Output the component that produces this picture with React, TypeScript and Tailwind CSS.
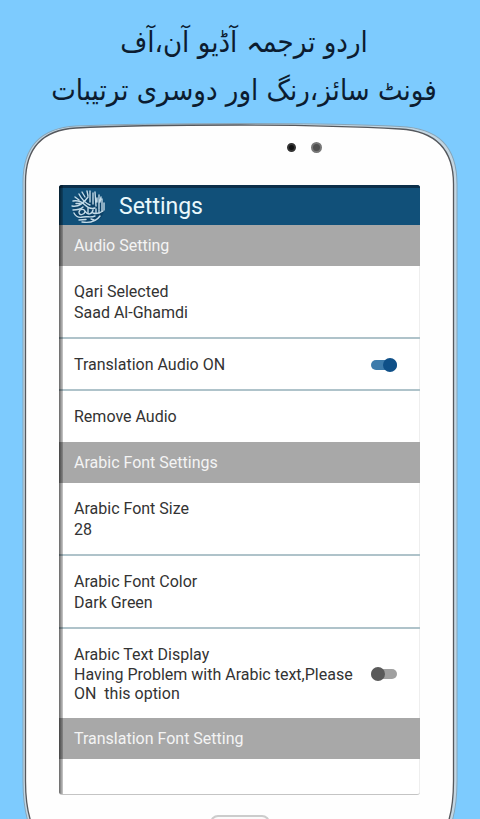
import type { ReactNode } from "react";

function Emblem() {
  return (
    <svg viewBox="0 0 34 34" className="h-[34px] w-[34px] shrink-0" fill="none" strokeLinecap="round" aria-hidden="true">
      <circle cx="18" cy="17.500" r="15.500" fill="#0c4268" />
      <g stroke="#c3dbe8" strokeWidth="1.400">
        <path d="M2 11 C7 10 11 12 14 15 C17 18 21 19 24 18 M1 16 C6 17 12 14 17 7 M8 4 C10 8 14 13 19 15" />
        <path d="M4 7 L8 10 M11 2 L14 7 M2 20 C7 20 10 19 12 17 M5 13.500 L9 13.500" />
        <path d="M16 1 L17 6 M19 1 V12 M22 3 V14 M24 2 L25 16 M28 5 V19 M31 9 V21 M26 8 V12 M30 7 L29 12 M33 13 V20" />
        <path d="M8 22 C9 18 14 19 14 22 C13 25 8 26 8 22 M14 21 C17 26 21 24 22 20 M22 23 C25 24 29 23 32 21" />
        <path d="M3 23 C5 27 8 28 12 27 C17 26 19 28 24 26 M11 32 C18 33 25 32 29 26 M17 18 L17 23 M25 19 L25 23 M28 20 V23 M20 29 L23 30 M8 30 L15 29.500" />
      </g>
    </svg>
  );
}

function TabletBody() {
  return (
    <svg
      viewBox="22 122 436 740"
      preserveAspectRatio="none"
      className="absolute inset-0 h-full w-full"
      aria-hidden="true"
    >
      <path
        d="M23 780 V182 C23 146 41 128 76 126 C120 124 180 123.500 240 123.500 C310 123.500 350 124 400 126.500 C438 128 457 146 457 184 V780 C457 830 440 861 400 861 H80 C40 861 23 830 23 780 Z"
        fill="#c3d6e2"
        stroke="#86a5b9"
      />
      <path
        d="M25.500 780 V182 C25.500 148 42 130 76 128 C120 125.500 180 125 240 125 C310 125 350 126 400 129 C434 131 453.500 148 453.500 184 V780 C453.500 828 438 858 400 858 H80 C42 858 25.500 828 25.500 780 Z"
        fill="#fefefe"
        stroke="#55585d"
        strokeWidth="1.300"
      />
    </svg>
  );
}

function SectionTitle({ children }: { children: ReactNode }) {
  return <h2 className="flex h-[41px] items-center bg-[#a8a8a8] px-[15px] text-[#f4f4f4]">{children}</h2>;
}

function Row({ children, divided = true }: { children: ReactNode; divided?: boolean }) {
  return (
    <div className={divided ? "border-b-2 border-[#afc3ca] px-[15px] pt-[15px] pb-[14px]" : "px-[15px] py-[15px]"}>
      {children}
    </div>
  );
}

function Toggle({ id, on }: { id: string; on?: boolean }) {
  return (
    <span className="relative mr-2 flex h-[14px] w-[26px] shrink-0 items-center">
      <input
        id={id}
        type="checkbox"
        role="switch"
        defaultChecked={on}
        className="peer h-[10px] w-full appearance-none rounded-full bg-[#a0a0a0] checked:bg-[#3d7bab]"
      />
      <span className="pointer-events-none absolute left-0 h-[14px] w-[14px] rounded-full bg-[#5a5a5a] peer-checked:left-3 peer-checked:bg-[#0f5088]" />
    </span>
  );
}

export default function App() {
  return (
    <div className="h-screen overflow-hidden bg-[#7dcbfe] font-['Roboto',sans-serif]">
      <h1
        dir="rtl"
        lang="ur"
        className="flex h-[122px] flex-col items-center pt-[18px] pl-2 font-['DejaVu_Sans_Condensed','DejaVu_Sans',sans-serif] text-[29px] leading-[48px] text-[#0c1c30]"
      >
        <span className="whitespace-nowrap">اردو ترجمہ آڈیو آن،آف</span>
        <span className="whitespace-nowrap">فونٹ سائز،رنگ اور دوسری ترتیبات</span>
      </h1>

      <main className="relative mx-[22px]">
        <TabletBody />
        <div className="relative pr-[38px] pl-[37px]">
          <div className="flex h-[63px] items-start justify-end gap-[15px] pt-5 pr-[98px]">
            <span className="mt-px h-[9px] w-[9px] rounded-full border-2 border-[#333] bg-[#111]" />
            <span className="h-[11px] w-[11px] rounded-full border-2 border-[#777] bg-[#505050]" />
          </div>

          <section className="overflow-hidden rounded-[3px] border-b border-[#c4c4c4] bg-white text-base leading-[21px] text-[#333] shadow-[inset_-1px_0_#eee]">
            <div className="relative">
              <span className="pointer-events-none absolute inset-y-0 left-0 z-10 w-1 bg-linear-to-r from-black/60 to-black/20" />
              <header className="flex h-10 items-center gap-[14px] border-t-[3px] border-[#0b2f4a] bg-[#115079] px-3">
                <Emblem />
                <span className="text-[23px] text-[#e9f8fc]">Settings</span>
              </header>

              <SectionTitle>Audio Setting</SectionTitle>
              <Row>
                <p>Qari Selected</p>
                <p>Saad Al-Ghamdi</p>
              </Row>
              <Row>
                <div className="flex items-center justify-between">
                  <label htmlFor="translation-audio">Translation Audio ON</label>
                  <Toggle id="translation-audio" on />
                </div>
              </Row>
              <Row divided={false}>
                <button type="button" className="block">Remove Audio</button>
              </Row>

              <SectionTitle>Arabic Font Settings</SectionTitle>
              <Row>
                <p>Arabic Font Size</p>
                <p>28</p>
              </Row>
              <Row>
                <p>Arabic Font Color</p>
                <p>Dark Green</p>
              </Row>
              <Row divided={false}>
                <div className="flex items-center justify-between">
                  <label htmlFor="arabic-text" className="w-[280px]">
                    <span className="block">Arabic Text Display</span>
                    <span className="block leading-[19px] whitespace-pre-wrap">Having Problem with Arabic text,Please ON  this option</span>
                  </label>
                  <Toggle id="arabic-text" />
                </div>
              </Row>
              <SectionTitle>Translation Font Setting</SectionTitle>
              <div className="h-[35px]" />
            </div>
          </section>

          <div className="flex h-[68px] justify-center pt-5">
            <button type="button" aria-label="Home" className="h-5 w-[60px] rounded-lg border-2 border-[#ccc] bg-[#fafafa]" />
          </div>
        </div>
      </main>
    </div>
  );
}
